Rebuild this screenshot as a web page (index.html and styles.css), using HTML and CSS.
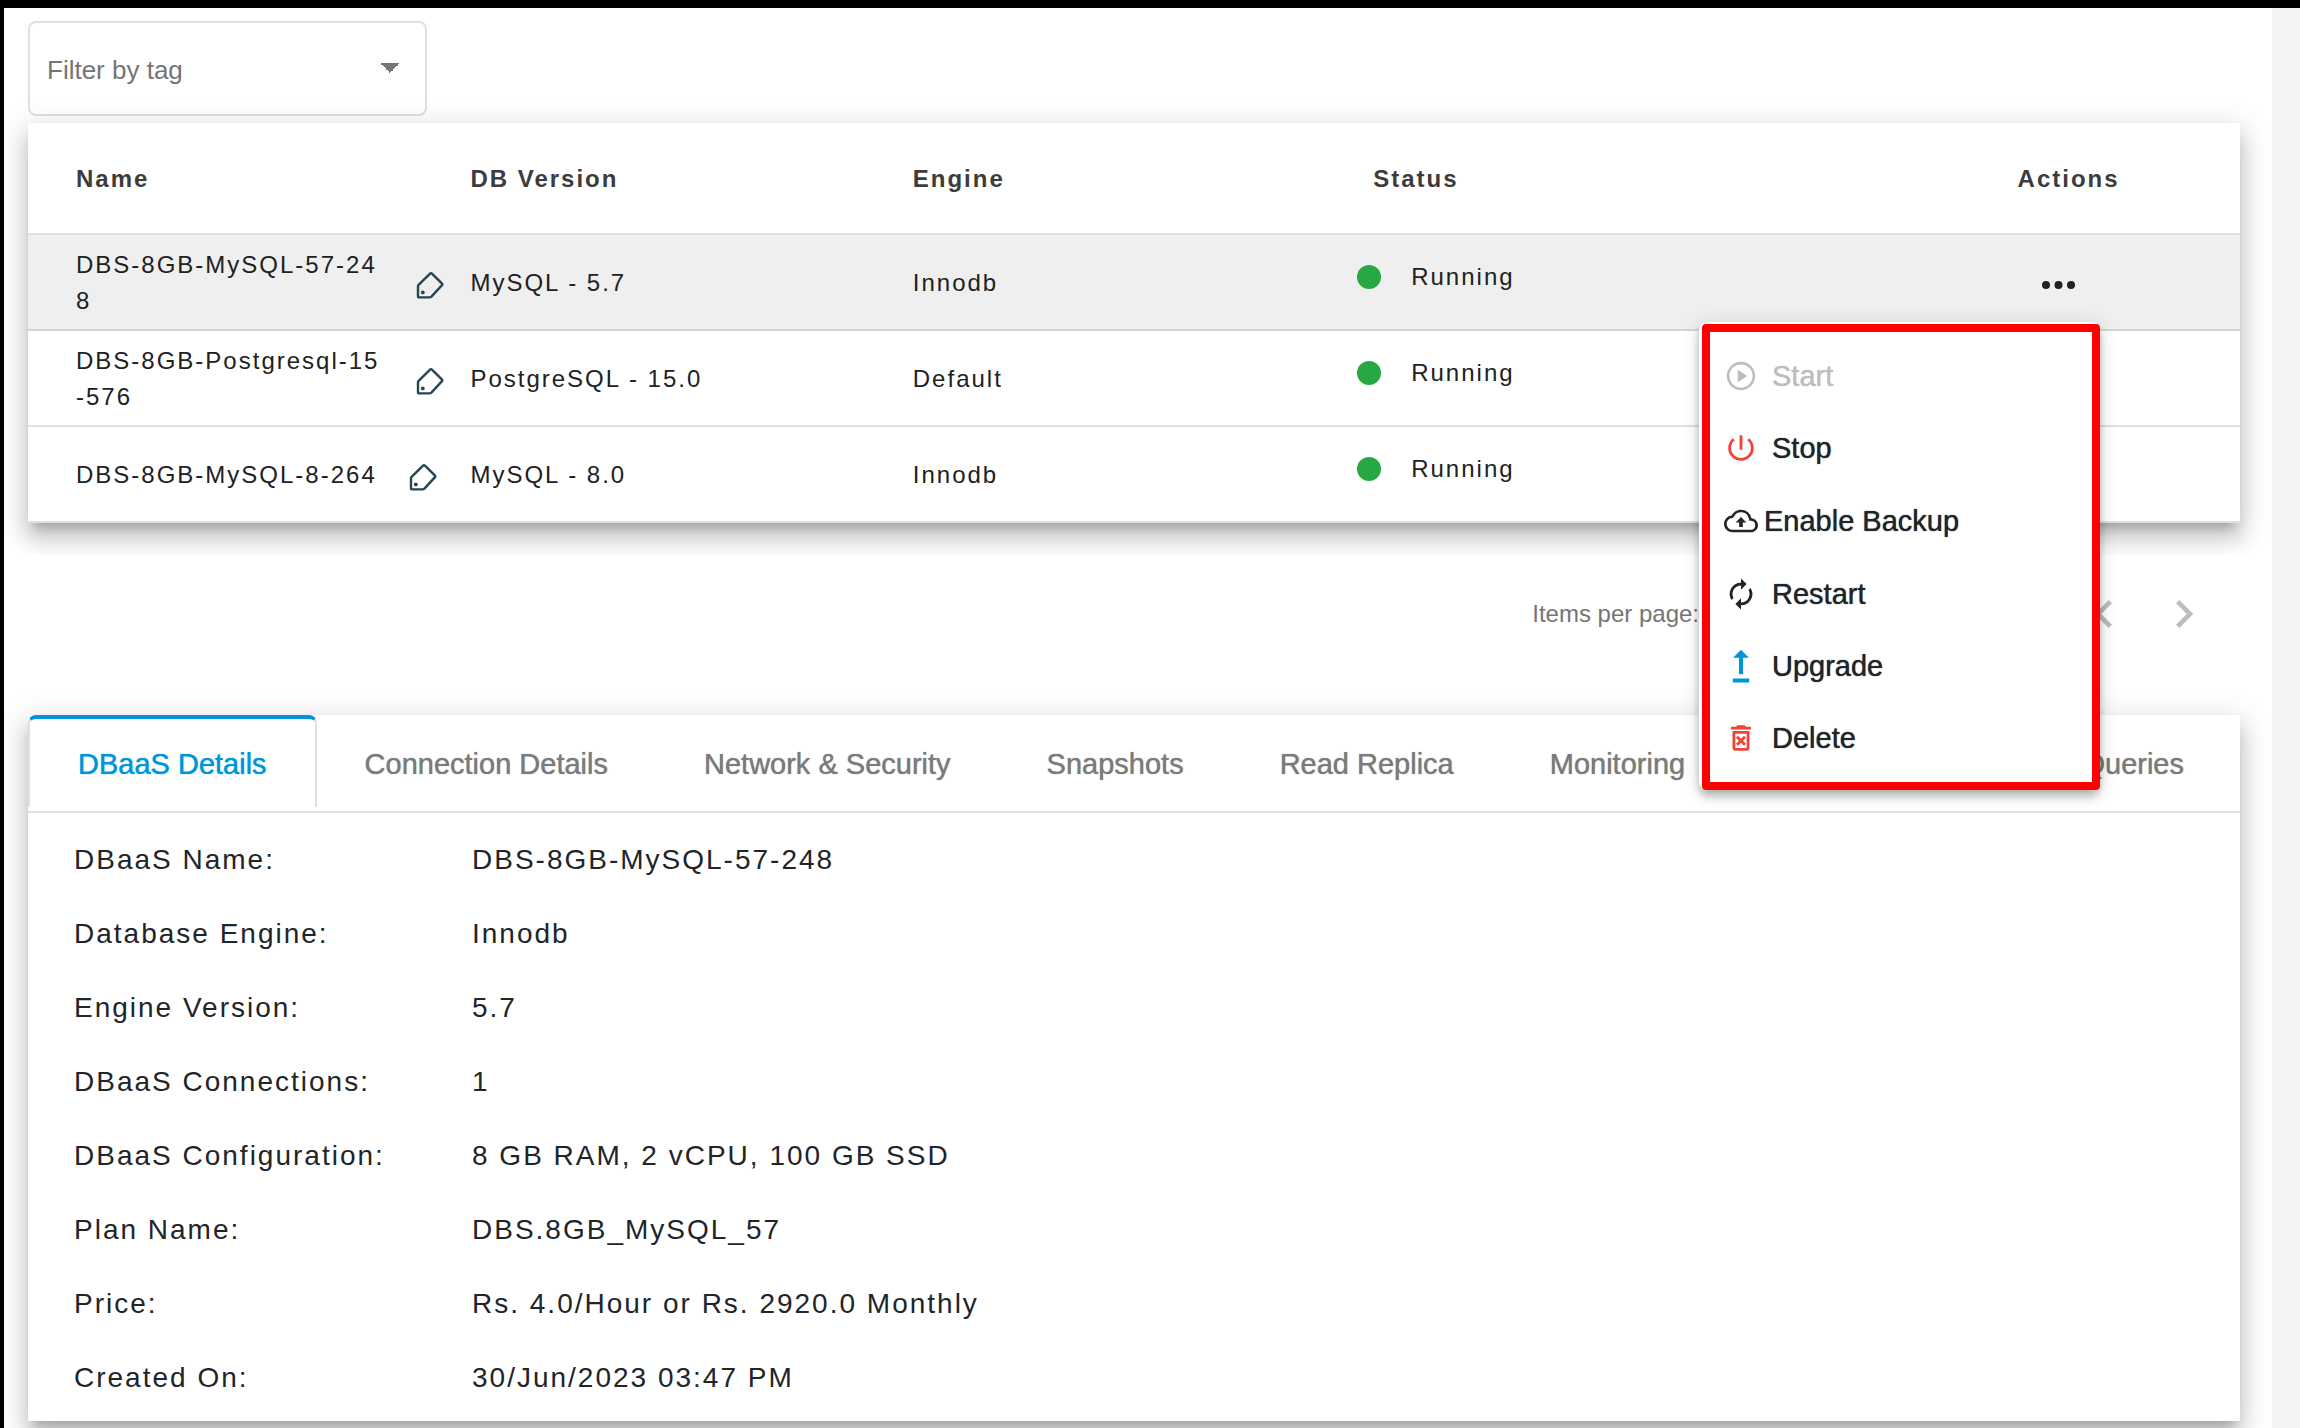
FILE: index.html
```html
<!DOCTYPE html>
<html lang="en">
<head>
<meta charset="utf-8">
<title>DBaaS</title>
<link rel="stylesheet" href="styles.css">
</head>
<body>
<svg class="sprite" aria-hidden="true">
  <symbol id="tag" viewBox="0 0 28 28"><path d="M2 15.200Q2 14.400 2.600 13.800L13.800 2.800Q15 1.700 16.200 2.800L25.800 12.400Q26.800 13.400 25.800 14.400L15.400 25.600Q14.600 26.400 13.400 26.400H3.400Q2 26.400 2 25Z" fill="none" stroke="#264653" stroke-width="2.400" stroke-linejoin="round"/><circle cx="6.800" cy="21.400" r="1.900" fill="#264653"/></symbol>
</svg>
<main class="page">
  <select class="filter" aria-label="Filter by tag"><option>Filter by tag</option></select>

  <section class="card">
    <table class="databases">
      <thead>
        <tr><th>Name</th><th>DB Version</th><th>Engine</th><th class="status-head">Status</th><th class="actions">Actions</th></tr>
      </thead>
      <tbody>
        <tr class="selected">
          <td><div class="name"><span>DBS-8GB-MySQL-57-248</span><button class="plain edit" aria-label="Edit tags"><svg class="tag"><use href="#tag"/></svg></button></div></td>
          <td>MySQL - 5.7</td><td>Innodb</td>
          <td><div class="status"><i class="dot"></i>Running</div></td>
          <td class="actions">
            <button class="plain more" aria-label="Actions"><svg width="34" height="8" viewBox="0 0 34 8" fill="#212121"><circle cx="4" cy="4" r="4"/><circle cx="16.500" cy="4" r="4"/><circle cx="29" cy="4" r="4"/></svg></button>
            <div class="menu">
              <div class="menu-list">
                <button class="item" disabled><svg class="icon" viewBox="0 0 24 24"><path d="M12 2a10 10 0 1 0 0 20 10 10 0 0 0 0-20zm0 18.200a8.200 8.200 0 1 1 0-16.400 8.200 8.200 0 0 1 0 16.400zM9.700 16.400 16.400 12 9.700 7.600z"/></svg>Start</button>
                <button class="item"><svg class="icon danger" viewBox="0 0 24 24"><path d="M13 3h-2v10.200h2zM17.800 5.200l-1.400 1.400a7 7 0 1 1-8.800 0L6.200 5.200a9 9 0 1 0 11.600 0z"/></svg>Stop</button>
                <button class="item backup"><svg class="icon" viewBox="0 0 24 24"><path d="M19.350 10.040A7.490 7.490 0 0 0 12 4C9.110 4 6.600 5.640 5.350 8.040A5.994 5.994 0 0 0 0 14c0 3.310 2.690 6 6 6h13c2.760 0 5-2.240 5-5 0-2.640-2.050-4.780-4.650-4.960zM19 18.200H6a4.200 4.200 0 0 1-.5-8.360l1-.1.500-.900a5.680 5.680 0 0 1 10.580 1.600l.300 1.300 1.400.1A3.200 3.200 0 0 1 19 18.200zM8.200 13h2.500v3.200h2.600V13h2.500L12 9.200z"/></svg>Enable Backup</button>
                <button class="item"><svg class="icon" viewBox="0 0 24 24"><path d="M12 6v3l4-4-4-4v3a8 8 0 0 0-6.760 12.260L6.700 14.800A5.870 5.870 0 0 1 6 12c0-3.310 2.690-6 6-6zm6.760 1.740L17.300 9.200A5.990 5.990 0 0 1 12 18v-3l-4 4 4 4v-3a8 8 0 0 0 6.760-12.260z"/></svg>Restart</button>
                <button class="item"><svg class="icon primary" viewBox="0 0 24 24"><path d="M12 .6 6.400 6.200h4.200v11.600h2.800V6.200h4.200zM6.200 20.800h11.600v2.800H6.200z"/></svg>Upgrade</button>
                <button class="item"><svg class="icon danger" viewBox="0 0 24 24"><path d="M14.120 10.470 12 12.590l-2.130-2.120-1.410 1.410L10.590 14l-2.120 2.120 1.410 1.410L12 15.410l2.120 2.120 1.410-1.410L13.410 14l2.120-2.120zM15.500 4l-1-1h-5l-1 1H5v2h14V4zM6 19c0 1.100.9 2 2 2h8c1.100 0 2-.9 2-2V7H6zM8 9h8v10H8z"/></svg>Delete</button>
              </div>
            </div>
          </td>
        </tr>
        <tr>
          <td><div class="name"><span>DBS-8GB-Postgresql-15-576</span><button class="plain edit" aria-label="Edit tags"><svg class="tag"><use href="#tag"/></svg></button></div></td>
          <td>PostgreSQL - 15.0</td><td>Default</td>
          <td><div class="status"><i class="dot"></i>Running</div></td><td></td>
        </tr>
        <tr>
          <td><div class="name"><span>DBS-8GB-MySQL-8-264</span><button class="plain edit" aria-label="Edit tags"><svg class="tag"><use href="#tag"/></svg></button></div></td>
          <td>MySQL - 8.0</td><td>Innodb</td>
          <td><div class="status"><i class="dot"></i>Running</div></td><td></td>
        </tr>
      </tbody>
    </table>
  </section>

  <div class="paginator">
    <span class="per-page">Items per page:</span>
    <button class="plain page-btn" aria-label="Previous page"><svg width="56" height="56" viewBox="0 0 24 24"><path d="M15.410 7.410 14 6l-6 6 6 6 1.410-1.410L10.830 12z"/></svg></button>
    <button class="plain page-btn" aria-label="Next page"><svg width="56" height="56" viewBox="0 0 24 24"><path d="M10 6 8.590 7.410 13.170 12l-4.580 4.590L10 18l6-6z"/></svg></button>
  </div>

  <section class="card">
    <nav class="tabs">
      <a class="tab active" href="#details">DBaaS Details</a>
      <a class="tab" href="#connection">Connection Details</a>
      <a class="tab" href="#network">Network &amp; Security</a>
      <a class="tab" href="#snapshots">Snapshots</a>
      <a class="tab" href="#replica">Read Replica</a>
      <a class="tab" href="#monitoring">Monitoring</a>
      <a class="tab last" href="#queries">Queries</a>
    </nav>
    <dl class="details" id="details">
      <dt>DBaaS Name:</dt><dd>DBS-8GB-MySQL-57-248</dd>
      <dt>Database Engine:</dt><dd>Innodb</dd>
      <dt>Engine Version:</dt><dd>5.7</dd>
      <dt>DBaaS Connections:</dt><dd>1</dd>
      <dt>DBaaS Configuration:</dt><dd>8 GB RAM, 2 vCPU, 100 GB SSD</dd>
      <dt>Plan Name:</dt><dd>DBS.8GB_MySQL_57</dd>
      <dt>Price:</dt><dd>Rs. 4.0/Hour or Rs. 2920.0 Monthly</dd>
      <dt>Created On:</dt><dd>30/Jun/2023 03:47 PM</dd>
    </dl>
  </section>
</main>
</body>
</html>
```
FILE: styles.css
```css
* { box-sizing: border-box; }

body {
  margin: 0;
  border-top: 8px solid #000;
  background: #f4f4f4;
  font-family: "Liberation Sans", Arial, Helvetica, sans-serif;
  color: #212529;
}

.sprite { display: none; }

.page {
  height: calc(100vh - 8px);
  margin-right: 28px;
  padding: 13px 32px 0 24px;
  border-left: 4px solid #000;
  background: #fff;
  overflow: hidden;
}

.plain {
  display: flex;
  padding: 0;
  border: 0;
  background: none;
}

.filter {
  display: block;
  width: 399px;
  height: 95px;
  padding: 2px 17px 0;
  border: 2px solid #e0e0e0;
  border-radius: 8px;
  appearance: none;
  background: linear-gradient(to bottom right, #757575 50%, transparent 50%) right 25px top 40px / 10px 10px no-repeat,
              linear-gradient(to bottom left, #757575 50%, transparent 50%) right 35px top 40px / 10px 10px no-repeat;
  font: 26px "Liberation Sans", Arial, sans-serif;
  color: #757575;
}

.card {
  margin-top: 7px;
  background: #fff;
  box-shadow: 0 10px 10px -6px rgba(0, 0, 0, .2),
              0 16px 20px 2px rgba(0, 0, 0, .14),
              0 6px 28px 4px rgba(0, 0, 0, .12);
}

.databases {
  width: 100%;
  table-layout: fixed;
  border-collapse: separate;
  border-spacing: 0;
  font-size: 24px;
  line-height: 36px;
  letter-spacing: 2px;
  color: #212121;
}

.databases th {
  height: 112px;
  padding: 2px 0 0;
  border-bottom: 2px solid #e0e0e0;
  text-align: left;
  color: #3c3c3c;
}

.databases td {
  height: 96px;
  padding: 2px 0 0;
  border-bottom: 2px solid #e0e0e0;
}

.databases th:first-child,
.databases td:first-child { padding-left: 48px; }

.databases .selected td {
  background: #efefef;
  border-bottom-color: #d3d3d3;
}

.databases .status-head { padding-left: 18px; }
.databases .actions { padding-left: 220px; }
.databases td.actions { position: relative; }

.name {
  display: flex;
  align-items: center;
  gap: 32px;
}

.name span {
  max-width: 308px;
  line-break: anywhere;
}

.edit { padding-top: 4px; }

.tag {
  width: 28px;
  height: 28px;
}

.status {
  display: flex;
  align-items: center;
  gap: 30px;
  padding: 0 0 12px 2px;
}

.dot {
  width: 24px;
  height: 24px;
  border-radius: 50%;
  background: #28a745;
}

.more { padding: 4px 0 0 24px; }

.menu {
  position: absolute;
  z-index: 2;
  top: 87px;
  right: 140px;
  width: 401px;
  padding: 2px 0 0 3px;
  border-radius: 8px;
  background: #fff;
  box-shadow: 0 4px 8px -2px rgba(0, 0, 0, .2),
              0 8px 10px rgba(0, 0, 0, .14),
              0 2px 20px rgba(0, 0, 0, .12);
}

.menu-list {
  display: flex;
  flex-direction: column;
  padding: 8px 0;
  border: 8px solid #f00;
  border-radius: 4px;
}

.item {
  display: flex;
  align-items: center;
  gap: 14px;
  height: 72px;
  padding: 0 14px;
  border: 0;
  background: none;
  font: 29px "Liberation Sans", Arial, sans-serif;
  text-shadow: 0 0 1px currentColor;
  color: #212529;
}

.item.backup {
  gap: 6px;
  height: 74px;
}

.item:disabled { color: #bdbdbd; }

.icon {
  width: 34px;
  height: 34px;
  fill: currentColor;
}

.icon.danger { fill: #f44336; }
.icon.primary { fill: #0095da; }

.paginator {
  display: flex;
  align-items: center;
  justify-content: flex-end;
  height: 118px;
  margin: 32px 0 42px;
  padding-right: 16px;
  background: #fff;
  font-size: 24px;
  color: #757575;
}

.per-page { margin-right: 365px; }

.page-btn {
  justify-content: center;
  width: 80px;
  fill: #bdbdbd;
}

.tabs {
  display: flex;
  height: 98px;
  padding: 0 8px 4px 0;
  border-bottom: 2px solid #e0e0e0;
}

.tab {
  padding: 0 48px;
  border-top: 4px solid transparent;
  font-size: 29px;
  line-height: 90px;
  text-decoration: none;
  text-shadow: 0 0 1px currentColor;
  color: #7b7b7b;
}

.tab.active {
  border: 2px solid #dee2e6;
  border-top: 4px solid #0095da;
  border-bottom: 0;
  border-radius: 8px 8px 0 0;
  color: #0095da;
}

.tab.last { margin-left: auto; }

.details {
  display: grid;
  grid-template-columns: 398px 1fr;
  margin: 0;
  padding: 10px 46px 6px;
  font-size: 28px;
  line-height: 74px;
  letter-spacing: 2px;
}

.details dd { margin: 0; }
```
